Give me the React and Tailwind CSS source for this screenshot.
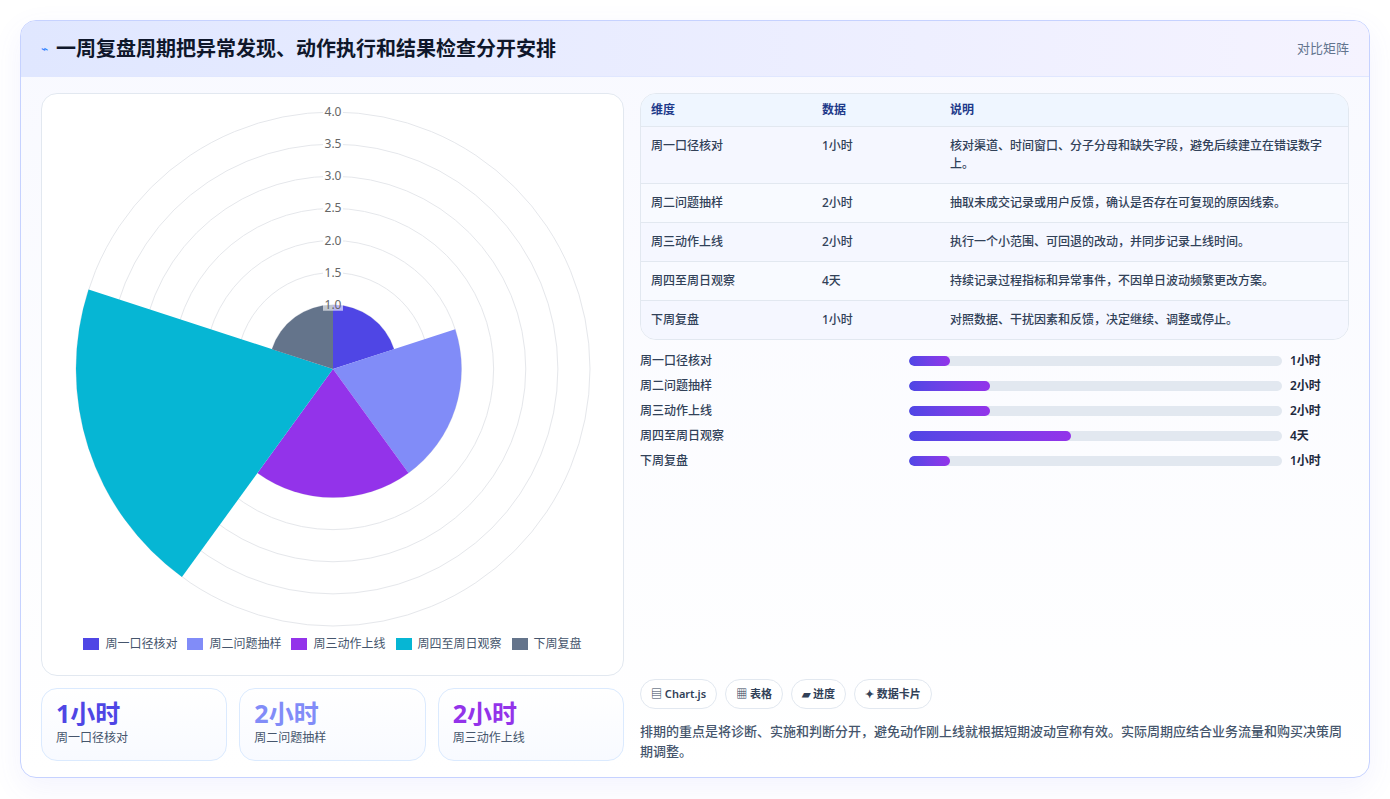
import React from "react";

const ITEMS = [
  { name: "周一口径核对", val: 1, label: "1小时", color: "#4f46e5", desc: "核对渠道、时间窗口、分子分母和缺失字段，避免后续建立在错误数字上。" },
  { name: "周二问题抽样", val: 2, label: "2小时", color: "#818cf8", desc: "抽取未成交记录或用户反馈，确认是否存在可复现的原因线索。" },
  { name: "周三动作上线", val: 2, label: "2小时", color: "#9333ea", desc: "执行一个小范围、可回退的改动，并同步记录上线时间。" },
  { name: "周四至周日观察", val: 4, label: "4天", color: "#06b6d4", desc: "持续记录过程指标和异常事件，不因单日波动频繁更改方案。" },
  { name: "下周复盘", val: 1, label: "1小时", color: "#64748b", desc: "对照数据、干扰因素和反馈，决定继续、调整或停止。" },
];

const CX = 290, CY = 275, U = 64.25;

const wedge = (i, v) => {
  const r = v * U;
  const a0 = (-90 + i * 72) * Math.PI / 180;
  const a1 = (-90 + (i + 1) * 72) * Math.PI / 180;
  return `M${CX} ${CY} L${CX + r * Math.cos(a0)} ${CY + r * Math.sin(a0)} A${r} ${r} 0 0 1 ${CX + r * Math.cos(a1)} ${CY + r * Math.sin(a1)} Z`;
};

function Polar() {
  const rings = [0.5, 1, 1.5, 2, 2.5, 3, 3.5, 4];
  return (
    <svg width="580" height="535" className="block">
      {rings.map((r) => (
        <circle key={r} cx={CX} cy={CY} r={r * U} fill="none" stroke="#e5e7eb" strokeWidth="1" />
      ))}
      {ITEMS.map((it, i) => <path key={i} d={wedge(i, it.val)} fill={it.color} />)}
      {rings.filter((r) => r >= 1).map((r) => (
        <g key={r}>
          <rect x={CX - 10} y={CY - r * U - 7} width="20" height="13" fill="white" fillOpacity={r === 1 ? 0.6 : 1} />
          <text x={CX} y={CY - r * U + 4} textAnchor="middle" fontSize="12" fill="#666">{r.toFixed(1)}</text>
        </g>
      ))}
    </svg>
  );
}

export default function App() {
  return (
    <div className="min-h-[799px] bg-white p-5" style={{ fontFamily: "'Noto Sans', 'Noto Sans CJK SC', sans-serif" }}>
      <div className="rounded-2xl border border-indigo-200 bg-gradient-to-b from-[#f8f9ff] to-white overflow-hidden shadow-[0_10px_30px_rgba(99,102,241,0.08)]">
        <div className="flex items-center justify-between h-14 px-5 bg-gradient-to-r from-[#e0e7ff] to-[#f5f3ff] border-b border-indigo-100">
          <div className="flex items-center gap-2">
            <span className="text-blue-500 text-xs">⌁</span>
            <h1 className="text-xl font-bold text-slate-900">一周复盘周期把异常发现、动作执行和结果检查分开安排</h1>
          </div>
          <span className="text-[13px] text-slate-500">对比矩阵</span>
        </div>
        <div className="flex gap-4 px-5 pt-4 pb-4">
          <div className="w-[583px] flex flex-col gap-3">
            <div className="rounded-2xl border border-slate-200 bg-white h-[583px] flex flex-col items-center">
              <Polar />
              <div className="flex gap-2.5 text-[12px] text-slate-600 mt-[6px]">
                {ITEMS.map((it) => (
                  <div key={it.name} className="flex items-center gap-1.5">
                    <span className="w-4 h-3 inline-block" style={{ background: it.color }} />
                    {it.name}
                  </div>
                ))}
              </div>
            </div>
            <div className="grid grid-cols-3 gap-3">
              {ITEMS.slice(0, 3).map((it) => (
                <div key={it.name} className="rounded-2xl border border-blue-100 bg-gradient-to-b from-white to-[#f8faff] px-3.5 py-2 h-[73px]">
                  <div className="text-[25px] font-bold leading-8" style={{ color: it.color }}>{it.label}</div>
                  <div className="text-[12px] text-slate-600">{it.name}</div>
                </div>
              ))}
            </div>
          </div>
          <div className="flex-1 flex flex-col">
            <div className="rounded-2xl border border-slate-200 overflow-hidden text-[12px]">
              <div className="flex bg-[#eff6ff] text-[#1e3a8a] font-semibold h-[33px] items-center border-b border-slate-200">
                <div className="w-[171px] px-2.5">维度</div>
                <div className="w-[128px] px-2.5">数据</div>
                <div className="flex-1 px-2.5">说明</div>
              </div>
              {ITEMS.map((it, i) => (
                <div key={it.name} className={`flex py-2.5 text-slate-700 font-medium ${i % 2 ? "bg-[#f8faff]" : "bg-[#f5f7ff]"} ${i < 4 ? "border-b border-slate-200" : ""}`}>
                  <div className="w-[171px] px-2.5">{it.name}</div>
                  <div className="w-[128px] px-2.5">{it.label}</div>
                  <div className="flex-1 px-2.5 pr-6 leading-[18px]">{it.desc}</div>
                </div>
              ))}
            </div>
            <div className="flex flex-col gap-[7px] mt-3 text-[12px] text-slate-700 font-medium">
              {ITEMS.map((it) => (
                <div key={it.name} className="flex items-center h-[18px]">
                  <div className="w-[269px]">{it.name}</div>
                  <div className="w-[373px] h-2.5 rounded-full bg-[#e2e8f0] overflow-hidden">
                    <div className="h-full rounded-full bg-gradient-to-r from-[#4f46e5] to-[#9333ea]" style={{ width: `${it.val / 9.2 * 100}%` }} />
                  </div>
                  <div className="ml-2 font-semibold text-slate-800">{it.label}</div>
                </div>
              ))}
            </div>
            <div className="mt-auto">
              <div className="flex gap-2 text-[11px] font-semibold text-slate-700">
                {["▤ Chart.js", "▦ 表格", "▰ 进度", "✦ 数据卡片"].map((t) => (
                  <span key={t} className="rounded-full border border-slate-200 bg-white px-2.5 py-1.5">{t}</span>
                ))}
              </div>
              <p className="mt-3 text-[13px] leading-[20px] text-slate-600 font-medium">排期的重点是将诊断、实施和判断分开，避免动作刚上线就根据短期波动宣称有效。实际周期应结合业务流量和购买决策周期调整。</p>
            </div>
          </div>
        </div>
      </div>
    </div>
  );
}
